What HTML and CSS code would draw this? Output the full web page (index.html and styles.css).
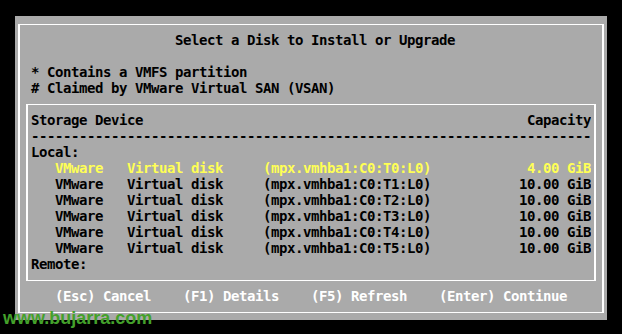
FILE: index.html
```html
<!DOCTYPE html>
<html lang="en">
<head>
  <meta charset="UTF-8">
  <title>Select a Disk to Install or Upgrade</title>
  <link rel="stylesheet" href="styles.css">
</head>
<body>
  <div class="screen">
    <div class="frame">
      <div class="line title">Select a Disk to Install or Upgrade</div>
      <div class="line"></div>
      <div class="line legend">* Contains a VMFS partition</div>
      <div class="line legend"># Claimed by VMware Virtual SAN (VSAN)</div>

      <div class="disks">
        <div class="line head"><span>Storage Device</span><span>Capacity</span></div>
        <div class="line rule">----------------------------------------------------------------------</div>
        <div class="line">Local:</div>
        <div class="line disk selected"><span>VMware</span><span>Virtual disk</span><span>(mpx.vmhba1:C0:T0:L0)</span><span>4.00 GiB</span></div>
        <div class="line disk"><span>VMware</span><span>Virtual disk</span><span>(mpx.vmhba1:C0:T1:L0)</span><span>10.00 GiB</span></div>
        <div class="line disk"><span>VMware</span><span>Virtual disk</span><span>(mpx.vmhba1:C0:T2:L0)</span><span>10.00 GiB</span></div>
        <div class="line disk"><span>VMware</span><span>Virtual disk</span><span>(mpx.vmhba1:C0:T3:L0)</span><span>10.00 GiB</span></div>
        <div class="line disk"><span>VMware</span><span>Virtual disk</span><span>(mpx.vmhba1:C0:T4:L0)</span><span>10.00 GiB</span></div>
        <div class="line disk"><span>VMware</span><span>Virtual disk</span><span>(mpx.vmhba1:C0:T5:L0)</span><span>10.00 GiB</span></div>
        <div class="line">Remote:</div>
      </div>

      <div class="line keys">(Esc) Cancel    (F1) Details    (F5) Refresh    (Enter) Continue</div>
    </div>
  </div>

  <div class="watermark">www.bujarra.com</div>
</body>
</html>
```

FILE: styles.css
```css
* {
  margin: 0;
  padding: 0;
  box-sizing: border-box;
}
body {
  background: #000;
  color: #000;
  font-family: 'DejaVu Sans Mono', 'Liberation Mono', monospace;
  font-size: 14px;
  font-weight: bold;
  letter-spacing: -0.43px;
  width: 622px;
  height: 334px;
  overflow: hidden;
  position: relative;
}
.screen {
  margin: 16px 0 0 15px;
  width: 592px;
  background: #aaa;
  padding: 8px 3px 7px;
}
.frame {
  border: 1px solid #fff;
  border-left-width: 2px;
  border-right-width: 2px;
  padding: 7px 0 8px;
}
.line {
  height: 16px;
  line-height: 16px;
  white-space: pre;
  overflow: hidden;
}
.title {
  padding-left: 155px;
}
.legend {
  padding-left: 11px;
}
.disks {
  margin: 8px 6px 0;
  border: 1px solid #fff;
  border-left-width: 2px;
  border-right-width: 2px;
  padding: 7px 3px 8px;
}
.head {
  display: flex;
  justify-content: space-between;
}
.disk {
  display: grid;
  grid-template-columns: 72px 136px 1fr auto;
  padding-left: 24px;
}
.selected {
  color: #ffff55;
}
.keys {
  margin-top: 7px;
  text-align: center;
  color: #fff;
}
.watermark {
  position: absolute;
  left: 3px;
  top: 308px;
  font-family: 'Liberation Sans', Arial, sans-serif;
  font-size: 18px;
  font-weight: bold;
  letter-spacing: 0;
  color: #44a12b;
}
```
